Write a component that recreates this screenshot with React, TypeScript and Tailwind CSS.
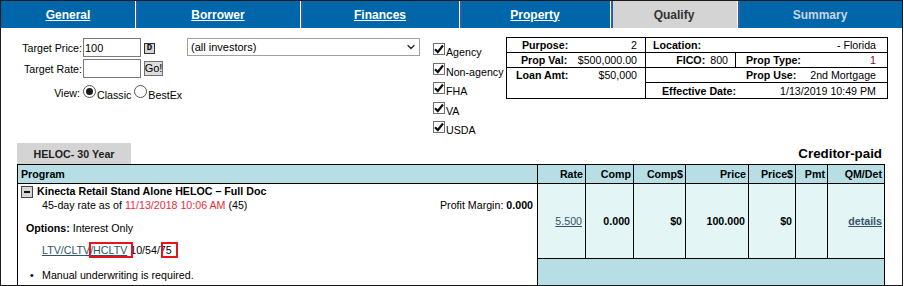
import { ChevronDown } from 'lucide-react'

const TABS = [
  { label: 'General', w: 'w-[134px]', kind: 'link' },
  { label: 'Borrower', w: 'w-[165px]', kind: 'link' },
  { label: 'Finances', w: 'w-[159px]', kind: 'link' },
  { label: 'Property', w: 'w-[151px]', kind: 'link' },
  { label: 'Qualify', w: 'w-[127px]', kind: 'active' },
  { label: 'Summary', w: 'flex-1', kind: 'off' },
]

const INVESTOR_TYPES = ['Agency', 'Non-agency', 'FHA', 'VA', 'USDA']

function CheckBox() {
  return (
    <span className="w-[12px] h-[12px] border border-[#707070] bg-white flex items-center justify-center shrink-0">
      <svg width="10" height="10" viewBox="0 0 10 10">
        <path d="M1 5.2 L3.8 8 L9 1.5" fill="none" stroke="#111" strokeWidth="2.2" />
      </svg>
    </span>
  )
}

function Radio({ on }: { on?: boolean }) {
  return (
    <span className="w-[13px] h-[13px] rounded-full border border-[#555] bg-white flex items-center justify-center shrink-0">
      {on && <span className="w-[7px] h-[7px] rounded-full bg-[#1a1a1a]" />}
    </span>
  )
}

export default function App() {
  return (
    <div className="w-[903px] h-[286px] border border-[#1a1a1a] bg-white text-[10.67px] text-black font-['Liberation_Sans',Arial,sans-serif] leading-[14px] overflow-hidden">
      {/* Tabs */}
      <div className="flex h-[27px] bg-[#0066aa]">
        {TABS.map((t, i) => (
          <div
            key={t.label}
            className={`${t.w} h-full flex items-center justify-center text-[12px] font-bold ${
              i > 0 ? 'border-l border-white shadow-[inset_2px_0_0_#2f5ea6]' : ''
            } ${t.kind === 'active' ? 'bg-[#d4d4d4] text-[#333]' : ''} ${
              t.kind === 'link' ? 'text-white underline' : ''
            } ${t.kind === 'off' ? 'text-[#c7d6e6]' : ''}`}
          >
            {t.label}
          </div>
        ))}
      </div>

      {/* Search form */}
      <div className="flex items-start h-[115px] pt-[10px]">
        <div className="w-[186px]">
          <div className="flex items-center h-[19px]">
            <span className="w-[81px] text-right">Target Price:</span>
            <span className="ml-[1px] w-[58px] h-[19px] border border-[#7a7a7a] px-[1px] text-[11px] flex items-center">100</span>
            <span className="ml-[3px] mt-[1px] w-[11px] h-[11px] border border-[#333] bg-[#d4d4d4] text-[9px] leading-none font-bold font-['Liberation_Mono',monospace] flex items-center justify-center">D</span>
          </div>
          <div className="flex items-center h-[19px] mt-[2px]">
            <span className="w-[81px] text-right">Target Rate:</span>
            <span className="ml-[1px] w-[58px] h-[19px] border border-[#7a7a7a]" />
            <span className="ml-[3px] w-[19px] h-[15px] border border-[#707070] bg-[#dcdcdc] text-[11px] leading-none flex items-center justify-center">Go!</span>
          </div>
          <div className="flex items-start mt-[7px]">
            <span className="w-[79px] text-right pt-[1px]">View:</span>
            <span className="ml-[3px]"><Radio on /></span>
            <span className="pt-[3px] ml-[1px]">Classic</span>
            <span className="ml-[3px]"><Radio /></span>
            <span className="pt-[3px] ml-[1px]">BestEx</span>
          </div>
        </div>

        <div className="w-[233px] h-[18px] border border-[#a0a0a0] flex items-center justify-between pl-[3px] pr-[2px] text-[11px]">
          <span>(all investors)</span>
          <ChevronDown size={12} strokeWidth={2.5} color="#222" />
        </div>

        <div className="ml-[13px] w-[73px] mt-[5px]">
          {INVESTOR_TYPES.map((t) => (
            <div key={t} className="flex items-start h-[19.6px]">
              <CheckBox />
              <span className="ml-[1px] mt-[2px]">{t}</span>
            </div>
          ))}
        </div>

        {/* Scenario summary */}
        <div className="flex -mt-[1px]">
          <div className="w-[140px] border border-black">
            <div className="flex justify-between h-[15px] border-b border-black pl-[15px] pr-[8px]">
              <b>Purpose:</b>
              <span>2</span>
            </div>
            <div className="flex justify-between h-[15px] border-b border-black pl-[14px] pr-[8px]">
              <b>Prop Val:</b>
              <span>$500,000.00</span>
            </div>
            <div className="flex justify-between h-[14px] pl-[9px] pr-[8px]">
              <b>Loan Amt:</b>
              <span>$50,000</span>
            </div>
          </div>
          <div className="-ml-px w-[243px] border border-black">
            <div className="flex justify-between h-[15px] border-b border-black pl-[7px] pr-[11px]">
              <b>Location:</b>
              <span>- Florida</span>
            </div>
            <div className="flex h-[15px] border-b border-black">
              <div className="w-[90px] border-r border-black flex justify-end pr-[7px]">
                <b>FICO:</b>
                <span className="ml-[5px]">800</span>
              </div>
              <div className="flex-1 flex justify-between pl-[10px] pr-[11px]">
                <b>Prop Type:</b>
                <span className="text-[#7a1040]">1</span>
              </div>
            </div>
            <div className="flex h-[15px] border-b border-black">
              <div className="w-[90px]" />
              <div className="flex-1 flex pl-[10px] pr-[11px]">
                <b>Prop Use:</b>
                <span className="ml-auto">2nd Mortgage</span>
              </div>
            </div>
            <div className="flex justify-between h-[15px] pl-[16px] pr-[11px] pt-[1px]">
              <b>Effective Date:</b>
              <span>1/13/2019 10:49 PM</span>
            </div>
          </div>
        </div>
      </div>

      {/* Results */}
      <div className="ml-[16px] w-[868px]">
        <div className="flex items-center justify-between h-[21px]">
          <div className="w-[114px] h-[21px] bg-[#d4d4d4] flex items-center justify-center font-bold text-[#222]">
            HELOC- 30 Year
          </div>
          <div className="text-[13.33px] font-bold pr-[3px]">Creditor-paid</div>
        </div>

        <div className="grid grid-cols-[520px_48px_48px_52px_63px_47px_32px_57px] grid-rows-[19px_75px_26px] border-l border-t border-black">
          {['Program', 'Rate', 'Comp', 'Comp$', 'Price', 'Price$', 'Pmt', 'QM/Det'].map((h, i) => (
            <div
              key={h}
              className={`bg-[#b6dee4] border-r border-b border-black font-bold flex items-center ${
                i === 0 ? 'pl-[3px]' : 'justify-end pr-[2px]'
              }`}
            >
              {h}
            </div>
          ))}

          <div className="row-span-2 border-r border-black">
            <div className="flex items-start pl-[3px] h-[14px]">
              <span className="mt-[2px] w-[12px] h-[12px] border border-[#444] bg-[#d6d6d6] flex items-center justify-center">
                <span className="w-[6px] h-[1.5px] bg-[#111]" />
              </span>
              <b className="ml-[4px]">Kinecta Retail Stand Alone HELOC – Full Doc</b>
            </div>
            <div className="flex justify-between h-[14px] pl-[24px] pr-[4px]">
              <span>
                45-day rate as of <span className="text-[#ee2a3a]">11/13/2018 10:06 AM</span> (45)
              </span>
              <span>
                Profit Margin: <b>0.000</b>
              </span>
            </div>
            <div className="h-[14px] mt-[9px] pl-[8px]">
              <b>Options:</b> Interest Only
            </div>
            <div className="relative h-[14px] mt-[8px] pl-[24px]">
              <span className="underline text-[#2e5566]">LTV/CLTV/HCLTV</span> 10/54/75
              <span className="absolute left-[71px] -top-[1px] w-[44px] h-[16px] border-2 border-[#e8141c]" />
              <span className="absolute left-[143px] -top-[1px] w-[17px] h-[16px] border-2 border-[#e8141c]" />
            </div>
            <div className="flex h-[14px] mt-[11px] pl-[12px]">
              <span className="w-[12px]">•</span>
              <span>Manual underwriting is required.</span>
            </div>
          </div>

          <div className="bg-[#e4f5f5] border-r border-b border-black flex items-center justify-end pr-[3px]">
            <span className="underline text-[#35536b]">5.500</span>
          </div>
          <div className="bg-[#e4f5f5] border-r border-b border-black flex items-center justify-end pr-[3px] font-bold">0.000</div>
          <div className="bg-[#e4f5f5] border-r border-b border-black flex items-center justify-end pr-[3px] font-bold">$0</div>
          <div className="bg-[#e4f5f5] border-r border-b border-black flex items-center justify-end pr-[3px] font-bold">100.000</div>
          <div className="bg-[#e4f5f5] border-r border-b border-black flex items-center justify-end pr-[3px] font-bold">$0</div>
          <div className="bg-[#e4f5f5] border-r border-b border-black" />
          <div className="bg-[#e4f5f5] border-r border-b border-black flex items-center justify-end pr-[2px] font-bold">
            <span className="underline text-[#35536b]">details</span>
          </div>

          <div className="col-span-7 bg-[#b6dee4] border-r border-black" />
        </div>
      </div>
    </div>
  )
}
